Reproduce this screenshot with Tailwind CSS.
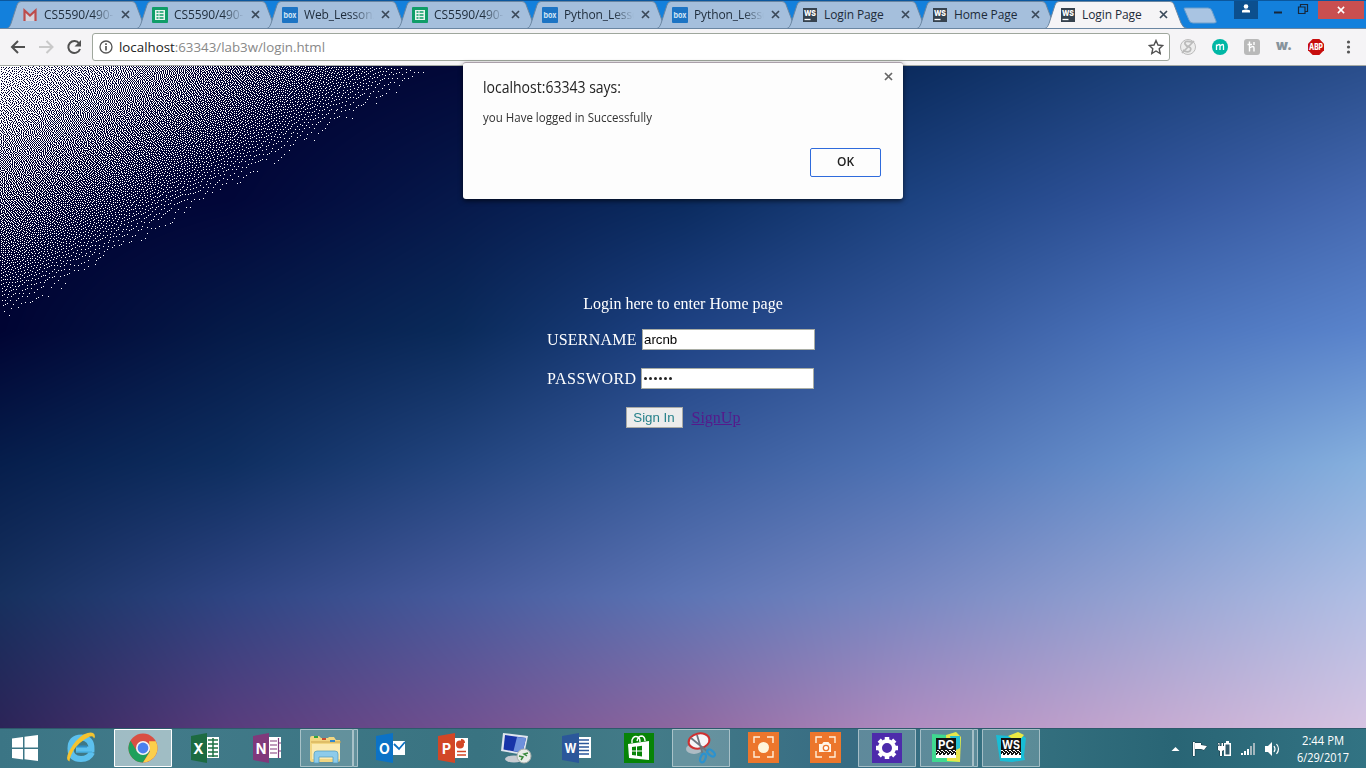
<!DOCTYPE html>
<html lang="en">
<head>
<meta charset="utf-8">
<title>Login Page</title>
<script src="https://cdn.jsdelivr.net/npm/@tailwindcss/browser@4"></script>
</head>
<body class="w-[1366px] h-[768px] overflow-hidden flex flex-col font-['Open_Sans',sans-serif]">

<svg class="hidden">
  <defs>
    <symbol id="tabshape" viewBox="0 0 142 29"><path d="M0 28.5 C2 28 3 26 4 23.500 L10 5 Q11 1.500 14 1.500 H125 Q128 1.500 129 4.500 L136 23 Q138 28 142 28.500Z" stroke="#6a86a2"/></symbol>
    <symbol id="x" viewBox="0 0 9 9"><path d="M1 1 8 8M8 1 1 8" stroke="currentColor" stroke-width="1.700" fill="none"/></symbol>
    <symbol id="gmail" viewBox="0 0 16 16"><path d="M2.500 14V3.500L8 8.500 13.500 3.500V14" fill="#d3d3dd" stroke="#bd4c4c" stroke-width="2.200"/></symbol>
    <symbol id="sheet" viewBox="0 0 16 16"><rect width="16" height="16" rx="1" fill="#0f9d68"/><path d="M3 3h10v10H3z" fill="#e8f5ee"/><path d="M4.500 5h2M4.500 8h2M4.500 11h2M7.500 5h4M7.500 8h4M7.500 11h4" stroke="#0f9d68" stroke-width="1.500"/></symbol>
    <symbol id="box" viewBox="0 0 16 16"><rect width="16" height="16" rx="1" fill="#1c74c4"/><text x="8" y="10.500" text-anchor="middle" font-family="Inter" font-weight="700" font-size="7.500" fill="#d5e6f5" textLength="13" lengthAdjust="spacingAndGlyphs">box</text></symbol>
    <symbol id="ws" viewBox="0 0 16 16"><rect x="1" y="1" width="14" height="14" fill="#36424e"/><text x="8" y="9" text-anchor="middle" font-family="Inter" font-weight="800" font-size="8" fill="#fff" textLength="12" lengthAdjust="spacingAndGlyphs">WS</text><path d="M2.500 12.500h6" stroke="#fff" stroke-width="1.300"/></symbol>
  </defs>
</svg>

<!-- Tab strip -->
<header class="h-[29px] shrink-0 relative bg-[#1380dc] border-t border-[#0b579d] flex overflow-hidden">
  <div class="absolute left-0 right-0 bottom-0 h-px bg-[#6a86a2]"></div>
  <nav id="tabs" class="flex pl-[7px] -mt-px"></nav>
  <svg class="absolute left-[1183px] top-[6px] w-[34px] h-[17px]" viewBox="0 0 34 17"><path d="M1 1.500Q1 1 3 1H25q3 0 4 3l4 10q1 2-2 2H10q-3 0-4-3Z" fill="#a9c4e2" stroke="#6f9fcb"/></svg>
  <div class="absolute right-0 -top-px flex h-[19px] text-[#17273a]">
    <div class="w-6 mr-[-2px] bg-[#0c4f8e] flex justify-center relative right-0"><svg class="w-6 h-[18px]" viewBox="0 0 24 18"><circle cx="12" cy="6.500" r="2.300" fill="#fff"/><path d="M8 12.500v-1.500q0-1.500 4-1.500t4 1.500V12.500z" fill="#fff"/></svg></div>
    <svg class="w-[28px] h-[19px] ml-2" viewBox="0 0 28 19"><path d="M10 12.500h8" stroke="currentColor" stroke-width="2"/></svg>
    <svg class="w-[24px] h-[19px]" viewBox="0 0 24 19"><path d="M6.500 7h6.500v6.500H6.500zM8.500 6.500V4.500H15.500V11.500H13.500" fill="none" stroke="currentColor" stroke-width="1.200"/></svg>
    <div class="w-[46px] ml-[2px] bg-[#c94f50] flex items-center justify-center text-white mr-[2px]"><svg class="w-2 h-2"><use href="#x"/></svg></div>
  </div>
</header>

<!-- Address bar -->
<section class="h-[37px] shrink-0 bg-[#f5f4f6] border-b border-[#a5aaa5] flex items-center text-[#555]">
  <svg class="w-[92px] h-9 shrink-0" viewBox="0 0 92 36" fill="none" stroke-width="2"><path d="M25 18H12.500M18 12l-6 6 6 6" stroke="#505050"/><path d="M39 18H52M46.500 12l6 6-6 6" stroke="#c9c9c9"/><path d="M79.200 14.500A6 6 0 1 0 80 20" stroke="#505050"/><path d="M81 11v6.500h-6.500z" fill="#505050"/></svg>
  <div class="w-[1078px] h-7 bg-white border border-[#9fa79d] rounded-[3px] flex items-center shrink-0">
    <svg class="w-[14px] h-[14px] ml-[6px]" viewBox="0 0 14 14"><circle cx="7" cy="7" r="6" fill="none" stroke="#555" stroke-width="1.300"/><path d="M7 6v4.500M7 3.300v1.600" stroke="#555" stroke-width="1.700"/></svg>
    <svg class="h-6 w-[215px] ml-[6px]" viewBox="0 0 215 24"><text x="0" y="17" font-size="13.500" textLength="206" lengthAdjust="spacingAndGlyphs" fill="#888"><tspan fill="#222">localhost</tspan>:63343/lab3w/login.html</text></svg>
    <svg class="w-4 h-4 ml-auto mr-[5px]" viewBox="0 0 16 16"><path d="M8 1.500 10 6l4.700.5-3.500 3.200 1 4.800L8 12l-4.200 2.500 1-4.800L1.300 6.500 6 6z" fill="none" stroke="#505050" stroke-width="1.400"/></svg>
  </div>
  <svg class="w-[196px] h-9 shrink-0" viewBox="0 0 196 36">
    <circle cx="18" cy="18" r="7.500" fill="#ededed" stroke="#bcbcbc"/><path d="M22 13q-8-2-7 2 1 2 4 3t1 4q-3 2-7-1M12 24 24 12" fill="none" stroke="#bababa" stroke-width="1.700"/>
    <circle cx="50" cy="18" r="8" fill="#00b7a5"/><path d="M46.500 21v-5.500M46.500 17q3.500-3 3.500 0v4M50 17q3.500-3 3.500 0v4" stroke="#fff" stroke-width="1.300" fill="none"/>
    <rect x="74" y="10" width="16" height="16" rx="3" fill="#b9b9b9"/><path d="M79.500 12.500v10M77.500 15.500h4.500M79.500 19q4.500-3 4.500 0v3.500M84 13v3" stroke="#fff" stroke-width="1.400" fill="none"/>
    <text x="106" y="21" font-family="Inter" font-weight="900" font-size="14" fill="#87939c" textLength="16" lengthAdjust="spacingAndGlyphs">w.</text>
    <path d="M142.700 10h6.600l4.700 4.700v6.600l-4.700 4.700h-6.600l-4.700-4.700v-6.600z" fill="#c70d0d"/><text x="146" y="21" text-anchor="middle" font-family="Inter" font-weight="800" font-size="8.500" fill="#fff" textLength="14" lengthAdjust="spacingAndGlyphs">ABP</text>
    <g fill="#555"><circle cx="178.500" cy="13" r="1.600"/><circle cx="178.500" cy="18" r="1.600"/><circle cx="178.500" cy="23" r="1.600"/></g>
  </svg>
</section>

<!-- Page -->
<main class="h-[662px] shrink-0 relative bg-[#23467f]">
  <canvas id="sky" width="1366" height="662" class="absolute inset-0"></canvas>
  <form class="relative flex flex-col items-center pt-[229px] text-white font-['Liberation_Serif',serif] text-[16px] leading-[18px]">
    <p>Login here to enter Home page</p>
    <div class="flex items-center mt-[16px] h-[21px] -ml-[4px]"><label class="w-[95px] whitespace-nowrap tracking-[0.2px]">USERNAME</label><div class="w-[173px] h-[21px] bg-white border border-[#a9ada5] text-black font-['Liberation_Sans',sans-serif] text-[13.3px] leading-[19px] pl-[1px]">arcnb</div></div>
    <div class="flex items-center mt-[18px] h-[21px] -ml-[5px]"><label class="w-[94px] whitespace-nowrap tracking-[0.5px]">PASSWORD</label><div class="w-[173px] h-[21px] bg-white border border-[#a9ada5] flex items-center pl-[2px] gap-[2px]"><i class="size-[3px] rounded-full bg-[#222]"></i><i class="size-[3px] rounded-full bg-[#222]"></i><i class="size-[3px] rounded-full bg-[#222]"></i><i class="size-[3px] rounded-full bg-[#222]"></i><i class="size-[3px] rounded-full bg-[#222]"></i><i class="size-[3px] rounded-full bg-[#222]"></i></div></div>
    <div class="flex items-center mt-[18px] h-[21px] gap-[9px]"><span class="w-[57px] h-[21px] bg-[#ececec] border border-[#a9aaa6] text-[#25808a] font-['Liberation_Sans',sans-serif] text-[13.3px] leading-[19px] text-center">Sign In</span><a class="text-[#551a8b] underline w-[49px]">SignUp</a></div>
  </form>

  <!-- Alert -->
  <div class="absolute left-[463px] -top-[4px] w-[440px] h-[137px] bg-[#fdfdfd] rounded-[3px] border-t border-[#aaa0aa] shadow-[0_2px_5px_rgba(0,0,0,0.6)] flex flex-col pl-5 pr-[22px] pt-[13px] text-[#222]">
    <svg class="absolute right-[10px] top-[9px] w-[9px] h-[9px] text-[#666]"><use href="#x"/></svg>
    <svg class="w-[200px] h-6 shrink-0" viewBox="0 0 200 24"><text x="0" y="17" font-size="15.500" fill="#222" textLength="138" lengthAdjust="spacingAndGlyphs">localhost:63343 says:</text></svg>
    <svg class="w-[200px] h-5 mt-[8px] shrink-0" viewBox="0 0 200 20"><text x="0" y="14" font-size="12" fill="#333" textLength="169" lengthAdjust="spacingAndGlyphs">you Have logged in Successfully</text></svg>
    <div class="self-end mt-[20px] w-[71px] h-[29px] border border-[#2f6bdc] rounded-[2px] text-center leading-[26px] text-[12px] font-semibold">OK</div>
  </div>
</main>

<!-- Taskbar -->
<footer class="h-10 shrink-0 relative border-t border-[#2d5a6b] bg-[linear-gradient(90deg,#3b7585_0%,#417a89_12%,#397381_35%,#437b88_48%,#376c83_62%,#34707f_75%,#296575_86%,#327383_100%)]">
  <svg class="w-[1366px] h-10 block" viewBox="0 729 1366 40" font-family="Inter" font-weight="700" fill="#fff">
    <defs><pattern id="speckle" width="4" height="4" patternUnits="userSpaceOnUse"><path d="M0 0h1v1h-1zM2 1h1v1h-1zM1 2h2v1h-2zM3 3h1v1h-1z" fill="#fff"/></pattern></defs>
    <g fill="#fff" fill-opacity=".2" stroke="#fff" stroke-opacity=".5">
      <path d="M300.500 729.500h52v37h-52zM353.500 729.500h4v37h-4zM672.500 729.500h57v37h-57zM858.500 729.500h57v37h-57zM920.500 729.500h52v37h-52zM973.500 729.500h4v37h-4zM982.500 729.500h57v37h-57z"/>
      <path d="M114.500 729.500h57v37h-57z" fill-opacity=".5" stroke-opacity="1"/>
    </g>
    <!-- Start -->
    <path d="M12 738.500l11-1.500v10.500H12zM24.500 736.800L38 735v12.500H24.500zM12 749h11v10.500L12 758zM24.500 749H38v12l-13.500-1.700z"/>
    <!-- Internet Explorer -->
    <path d="M92 752.500q-3 6.500-11 6.500-10.500 0-10.500-10.500t11-11q10.500 1 10 12H76" fill="none" stroke="#5cc0ee" stroke-width="6"/><path d="M76 746.500h11" stroke="#2e8fc6" stroke-width="2"/><path d="M76 752h16" stroke="#3fa9dc" stroke-width="1"/>
    <path d="M69.500 761.500q-5-1 0-11 6-11 14-16 9-4 11 0 1 2-.500 4-1-4-6-1-9 4.500-14.500 13-4 7-4 11z" fill="#f4c430"/>
    <!-- Chrome -->
    <circle cx="143" cy="748" r="14.500" fill="#d94f43"/><path d="M130.500 740.700A14.500 14.500 0 0 0 143 762.500l7-11.500-13 .500z" fill="#1fa05c"/><path d="M155.800 741.200A14.500 14.500 0 0 1 143 762.500l7-11-1-10.300z" fill="#fbcf4b"/><circle cx="143" cy="748" r="7" fill="#f4f4f4"/><circle cx="143" cy="748" r="5.400" fill="#4a80ef"/>
    <!-- Excel -->
    <path d="M206 737h13v21h-13z"/><path d="M208 740h10M208 744h10M208 748h10M208 752h10M208 756h10M213 738v19" stroke="#1e7145" stroke-width="1.500"/><path d="M191 736l16-3v30l-16-3z" fill="#1d6b41"/><text x="198.500" y="753.500" text-anchor="middle" font-size="14">X</text>
    <!-- OneNote -->
    <path d="M269 737h12v21h-12z"/><path d="M270 741h7M270 745h7M270 749h7M270 753h7M278.500 738v20M278 743h3M278 751h3" stroke="#80397b" stroke-width="1.200"/><path d="M253 736l16-3v30l-16-3z" fill="#80397b"/><text x="261" y="753.500" text-anchor="middle" font-size="14">N</text>
    <!-- Explorer -->
    <path d="M310 738q0-2 2-2h7l2 2h7l1-1h5l2 3h4v20q0 2-2 2h-26q-2 0-2-2z" fill="#f1d682"/><path d="M312 744h28v15h-28z" fill="#fbeab0"/><path d="M311 742h30" stroke="#cda54d"/><path d="M314 736h4v2h-4z" fill="#2fa33f"/><path d="M322 738h4v2h-4z" fill="#c84b31"/><path d="M330 740h5v2h-5z" fill="#3488cc"/><path d="M314 763v-9q0-3 3-3h18q3 0 3 3v9h-5v-6h-14v6z" fill="#8dcbea" stroke="#4e99bd" stroke-width=".7"/>
    <!-- Outlook -->
    <path d="M392 741h13v14h-13z"/><path d="M394 744l5 5 6-7" stroke="#0c70c0" stroke-width="1.800" fill="none"/><path d="M376 736l17-3v30l-17-3z" fill="#0c72c6"/><text x="384.500" y="753.500" text-anchor="middle" font-size="14">O</text>
    <!-- PowerPoint -->
    <path d="M455 738h13v20h-13z"/><circle cx="460" cy="744.500" r="4" fill="#d24726"/><path d="M461 743v-4a4 4 0 0 1 4 4z" fill="#d24726"/><path d="M457 751.500h9M457 755h9" stroke="#d24726" stroke-width="1.500"/><path d="M438 736l17-3v30l-17-3z" fill="#d24726"/><text x="446.500" y="753.500" text-anchor="middle" font-size="14">P</text>
    <!-- Remote desktop -->
    <ellipse cx="514" cy="759" rx="9" ry="3.500" fill="#c8ccd2"/><path d="M503 733l25 3-4 19-23-4z" fill="#dfe5ee"/><path d="M505 735l21 3-3.500 15-19-3.500z" fill="#1834a8"/><path d="M517 737l9 1-3.500 15-9-2z" fill="#6e91dc"/><circle cx="524" cy="756" r="7" fill="#e8ece8" stroke="#a9afaa"/><path d="M519 756l4 1-2 3M528 753l-4 1 3 2" stroke="#3a8a3c" stroke-width="1.500" fill="none"/>
    <!-- Word -->
    <path d="M578 737h13v21h-13z"/><path d="M579 740h10M579 743.500h10M579 747h10M579 750.500h10M579 754h10" stroke="#2b579a" stroke-width="1.400"/><path d="M562 736l17-3v30l-17-3z" fill="#2b579a"/><text x="570.500" y="753" text-anchor="middle" font-size="13" textLength="12" lengthAdjust="spacingAndGlyphs">W</text>
    <!-- Store -->
    <path d="M624 733h30v30h-30z" fill="#078407"/><path d="M628 744l21-3v19l-20-2zM" /><path d="M632 743v-3q2-5 6-3 2 1 2 5M637 741q1-5 5-5 3 1 3 5" fill="none" stroke="#fff" stroke-width="1.400"/><path d="M632 747l4-.500v4h-4zM637 746.500l5-.700v4.700h-5zM632 751.500h4v4l-4-.500zM637 751.500h5v5l-5-.7z" fill="#078407"/>
    <!-- Snipping Tool -->
    <ellipse cx="694" cy="749" rx="8" ry="5" fill="#aebcc4"/><ellipse cx="699" cy="741" rx="10.500" ry="7.500" transform="rotate(-12 699 741)" fill="#f6f6f8" stroke="#cf3030" stroke-width="2"/><path d="M691 738l17 14M697 735l6 20" stroke="#6f7780" stroke-width="1.800"/><ellipse cx="703" cy="758" rx="2.500" ry="4.500" transform="rotate(20 703 758)" fill="none" stroke="#2b92cf" stroke-width="2.200"/><ellipse cx="711" cy="753" rx="2.500" ry="4.500" transform="rotate(-50 711 753)" fill="none" stroke="#2b92cf" stroke-width="2.200"/>
    <!-- Capture tools -->
    <path d="M748 732h31v31h-31zM810 732h31v31h-31z" fill="#ec762c"/>
    <path d="M754 743v-6h6M767 737h6v6M773 751v6h-6M760 757h-6v-6M816 743v-6h6M829 737h6v6M835 751v6h-6M822 757h-6v-6" fill="none" stroke="#fff0da" stroke-width="1.400"/><circle cx="763.500" cy="747.500" r="5.500" fill="#fff5db"/><path d="M819 744h3l1.500-2h5l1.500 2h1v8h-12z" fill="#fff5e8"/><circle cx="826" cy="748" r="2.700" fill="#fff" stroke="#ec762c" stroke-width="1.300"/>
    <!-- Settings -->
    <path d="M872 733h30v30h-30z" fill="#4d2bab"/><circle cx="887" cy="748" r="7" fill="none" stroke="#fff" stroke-width="4"/><g stroke="#fff" stroke-width="4.500"><path d="M887 737v3M887 756v3M876 748h3M895 748h3M879.200 740.200l2 2M892.800 753.800l2 2M879.200 755.800l2-2M892.800 742.200l2-2"/></g>
    <!-- PyCharm -->
    <path d="M932 734l16 1 8-3 5 6-2 24h-27z" fill="#40d890"/><path d="M946 735l10-3 5 5-1 25-13-1z" fill="#e8e54a"/><path d="M950 736h10v12l-6 3z" fill="#25bfd3"/><path d="M936 738h20v19h-20z" fill="#141414"/><path d="M936 750h20v5h-20z" fill="url(#speckle)"/><text x="946" y="749" text-anchor="middle" font-size="12" textLength="16" lengthAdjust="spacingAndGlyphs">PC</text><path d="M936 755h20v3h-20z"/>
    <!-- WebStorm -->
    <path d="M996 735l13 1 10-3 7 5-2 18 1 4-13 2-12-1z" fill="#18bdd6"/><path d="M1008 736l10-4 6 3-6 7z" fill="#ebe943"/><path d="M1001 738h20v19h-20z" fill="#141414"/><path d="M1001 750h20v5h-20z" fill="url(#speckle)"/><text x="1011" y="749" text-anchor="middle" font-size="12" textLength="18" lengthAdjust="spacingAndGlyphs">WS</text><path d="M1001 755h20v3h-20z"/>
    <!-- Tray -->
    <path d="M1171.500 751l4-4 4 4z"/>
    <g stroke="#173642" stroke-width="1" paint-order="stroke"><path d="M1193 742h1.800v14h-1.800zM1195 743h6v2l6 1-3 4-3-1h-6z"/><path d="M1218 743h1.500v3h2v-3h1.500v3h1v4l-2 1v5h-2v-5l-2-1v-4h1z"/></g>
    <path d="M1226 741h3v2h2v13h-7v-13h2z"/><path d="M1225.500 744.500h4v10h-4z" fill="#315a6a"/>
    <path d="M1241 753h2v2h-2zM1244 751h2v4h-2zM1247 749h2v6h-2z"/><path d="M1250 746h2v9h-2zM1253 743h2v12h-2z" fill="#a3b6bd"/>
    <path d="M1265 746h3l4-4v14l-4-4h-3z"/><path d="M1274 746q2 3 0 6M1276.500 744q4 5 0 10" stroke="#fff" fill="none" stroke-width="1.200"/>
    <g font-family="Open Sans" font-weight="400" font-size="12"><text x="1302" y="744.500" textLength="42" lengthAdjust="spacingAndGlyphs">2:44 PM</text><text x="1297" y="761.500" textLength="52" lengthAdjust="spacingAndGlyphs">6/29/2017</text></g>
  </svg>
</footer>

<script>
// Tabs: icon, title
const tabs = [['gmail','CS5590/490-'],['sheet','CS5590/490-'],['box','Web_Lesson2'],['sheet','CS5590/490-'],['box','Python_Lesson'],['box','Python_Lesson'],['ws','Login Page'],['ws','Home Page'],['ws','Login Page']];
document.getElementById('tabs').innerHTML = tabs.map(([icon, title], i) => {
  const on = i === 8;
  return `<div class="relative w-[142px] -mr-[12px] h-[29px] flex items-center shrink-0 ${on ? 'z-10 -ml-[2px]' : ''}">
    <svg class="absolute inset-0 w-[142px] h-[29px] ${on ? 'fill-[#f5f4f6]' : 'fill-[#a5bfdc]'}"><use href="#tabshape"/></svg>
    <svg class="relative w-4 h-4 ml-[15px] shrink-0"><use href="#${icon}"/></svg>
    <span class="relative ml-[6px] w-[70px] overflow-hidden whitespace-nowrap text-[12px] tracking-[-0.1px] leading-4 text-[#1d2b3a] ${i < 6 ? '[mask-image:linear-gradient(90deg,#000_70%,transparent)]' : ''}">${title}</span>
    <svg class="relative w-[9px] h-[9px] ml-[7px] shrink-0 text-[#3b4a5a]"><use href="#x"/></svg></div>`;
}).join('');

// Twilight sky: a colour grid blended smoothly, with a starry stipple in the top-left corner
const grid = [
  ['000030','000030','020838','061c4c','0b2b5e','1a3f78','2a4e8c'],
  ['000030','010638','06184a','0a2a5e','1c4280','30539a','4468b0'],
  ['000433','051a48','0a2a5a','1e4284','34579a','4a72ba','5a84cc'],
  ['061e4c','0e2e60','22447e','3a5c9c','4e72b4','6890cc','86b0de'],
  ['16305e','2e4482','465a9c','5c74b4','7888c2','94a2d2','b0bee4'],
  ['2c2458','583c7c','705090','8e68a0','b08cc0','c4a8d0','d6c4e2']
].map(r => r.map(h => [0, 2, 4].map(k => parseInt(h.substr(k, 2), 16))));
const W = 1366, H = 662, ctx = document.getElementById('sky').getContext('2d');
const img = ctx.createImageData(W, H);
let err = new Float32Array(W + 2);
for (let y = 0; y < H; y++) {
  const next = new Float32Array(W + 2), gy = y / H * 5, j = Math.floor(gy), fy = gy - j;
  for (let x = 0; x < W; x++) {
    const gx = x / W * 6, i = Math.floor(gx), fx = gx - i, p = (y * W + x) * 4;
    const t = x / 446 + y / 260;
    let star = false;
    if (t < 1) {
      const v = 0.8 * (1 - t) + err[x + 1];
      star = v > 0.5 + (Math.random() - 0.5) * 0.25;
      const e = v - (star ? 1 : 0);
      err[x + 2] += e * 7 / 16; next[x] += e * 3 / 16; next[x + 1] += e * 5 / 16; next[x + 2] += e / 16;
    }
    for (let c = 0; c < 3; c++) {
      const a = grid[j][i][c] * (1 - fx) + grid[j][i + 1][c] * fx;
      const b = grid[j + 1][i][c] * (1 - fx) + grid[j + 1][i + 1][c] * fx;
      img.data[p + c] = star ? 255 : a * (1 - fy) + b * fy;
    }
    img.data[p + 3] = 255;
  }
  err = next;
}
ctx.putImageData(img, 0, 0);
</script>
</body>
</html>
